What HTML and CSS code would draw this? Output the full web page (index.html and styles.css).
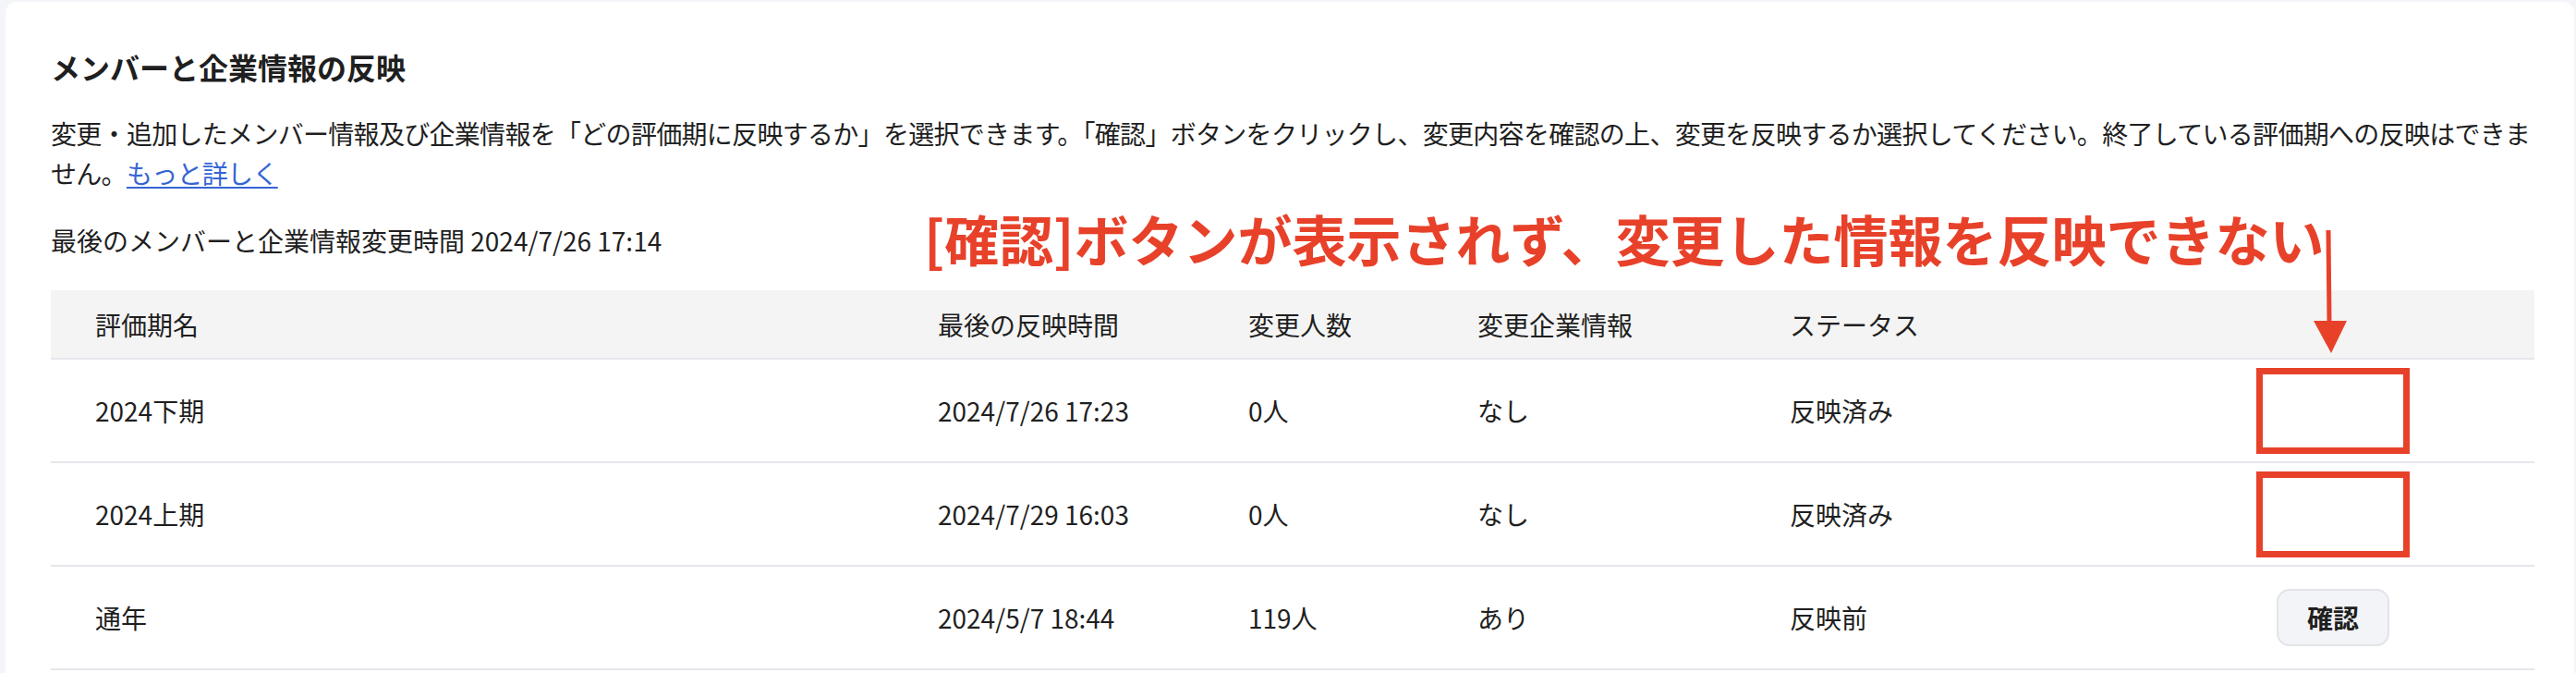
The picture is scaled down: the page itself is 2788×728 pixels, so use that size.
FILE: index.html
```html
<!DOCTYPE html>
<html lang="ja">

<head>
    <meta charset="UTF-8">
    <title>メンバーと企業情報の反映</title>
    <link rel="stylesheet" href="styles.css">
</head>

<body>
    <section class="card">
        <h2 class="card-title">メンバーと企業情報の反映</h2>
        <p class="lead">変更・追加したメンバー情報及び企業情報を「どの評価期に反映するか」を選択できます。「確認」ボタンをクリックし、変更内容を確認の上、変更を反映するか選択してください。終了している評価期への反映はできません。<a href="#" class="more">もっと詳しく</a></p>
        <p class="last-change">最後のメンバーと企業情報変更時間 2024/7/26 17:14</p>

        <table class="periods">
            <colgroup>
                <col class="c-name">
                <col class="c-time">
                <col class="c-count">
                <col class="c-company">
                <col class="c-status">
                <col class="c-action">
            </colgroup>
            <thead>
                <tr>
                    <th>評価期名</th>
                    <th>最後の反映時間</th>
                    <th>変更人数</th>
                    <th>変更企業情報</th>
                    <th>ステータス</th>
                    <th></th>
                </tr>
            </thead>
            <tbody>
                <tr>
                    <td>2024下期</td>
                    <td>2024/7/26 17:23</td>
                    <td>0人</td>
                    <td>なし</td>
                    <td>反映済み</td>
                    <td class="action"><span class="mark"></span></td>
                </tr>
                <tr>
                    <td>2024上期</td>
                    <td>2024/7/29 16:03</td>
                    <td>0人</td>
                    <td>なし</td>
                    <td>反映済み</td>
                    <td class="action"><span class="mark"></span></td>
                </tr>
                <tr>
                    <td>通年</td>
                    <td>2024/5/7 18:44</td>
                    <td>119人</td>
                    <td>あり</td>
                    <td>反映前</td>
                    <td class="action"><button class="confirm">確認</button></td>
                </tr>
            </tbody>
        </table>

        <!-- 注釈 -->
        <p class="note">[確認]ボタンが表示されず、変更した情報を反映できない</p>
        <svg class="note-arrow" width="48" height="140" viewBox="0 0 48 140">
            <line x1="20" y1="4" x2="21" y2="104" stroke="#e8412a" stroke-width="5" />
            <polygon points="4,102 40,102 23,137" fill="#e8412a" />
        </svg>
    </section>
</body>

</html>
```

FILE: styles.css
```css
* {
    box-sizing: border-box;
    margin: 0;
    padding: 0;
}

body {
    background: #f4f5f9;
    padding: 2px 2px 0 6px;
    font-family: "Noto Sans CJK JP", "Noto Sans", sans-serif;
    color: #1f1f1f;
}

.card {
    position: relative;
    background: white;
    border-radius: 12px;
    padding: 46px 44px 0 49px;
    height: 760px;
}

.card-title {
    font-size: 32px;
    font-weight: 700;
    line-height: 48px;
}

.lead {
    margin-top: 27px;
    font-size: 28px;
    line-height: 43px;
    letter-spacing: -0.7px;
}

.more {
    color: #3565d4;
    text-decoration: underline;
    text-underline-offset: 3px;
    text-decoration-thickness: 2px;
}

.last-change {
    margin-top: 30px;
    font-size: 28px;
    line-height: 42px;
}

.periods {
    margin-top: 33px;
    width: 100%;
    table-layout: fixed;
    border-collapse: collapse;
    font-size: 28px;
}

.c-name {
    width: 912px;
}

.c-time {
    width: 336px;
}

.c-count {
    width: 248px;
}

.c-company {
    width: 338px;
}

.c-status {
    width: 418px;
}

.c-action {
    width: 436px;
}

.periods th,
.periods td {
    text-align: left;
    font-weight: 400;
    padding: 0 0 0 48px;
    border-bottom: 2px solid #e6e6ec;
    white-space: nowrap;
}

.periods th {
    background: #f4f4f4;
    height: 74px;
}

.periods td {
    height: 112px;
}

.periods td.action {
    padding: 0;
    text-align: center;
}

.mark {
    display: inline-block;
    vertical-align: middle;
    width: 166px;
    height: 93px;
    border: 7px solid #e8412a;
}

.confirm {
    width: 122px;
    height: 62px;
    vertical-align: middle;
    border: 2px solid #e3e4e9;
    border-radius: 14px;
    background: #f3f4f7;
    font-family: inherit;
    font-size: 28px;
    font-weight: 700;
    color: #1f1f1f;
}

.note {
    position: absolute;
    left: 994px;
    top: 226px;
    font-size: 59px;
    font-weight: 700;
    line-height: 1;
    color: #e8412a;
    white-space: nowrap;
}

.note-arrow {
    position: absolute;
    left: 2494px;
    top: 243px;
}
```
